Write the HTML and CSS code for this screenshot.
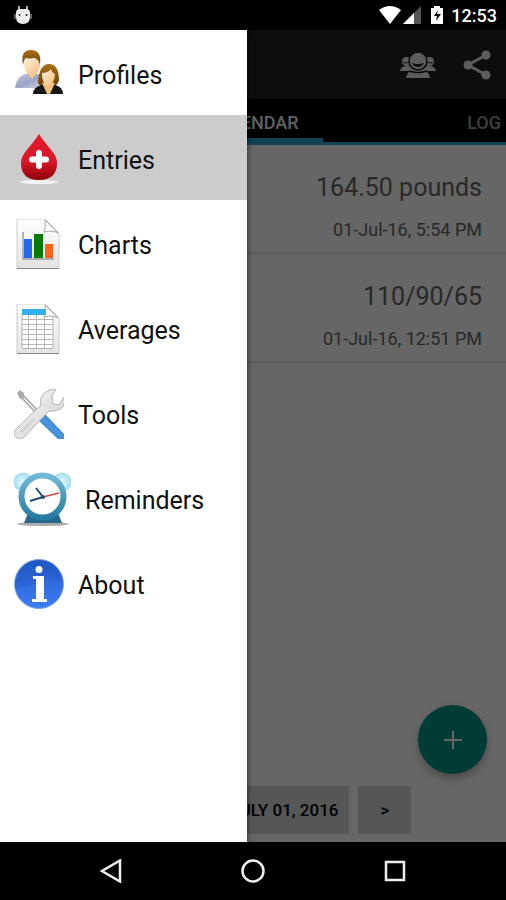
FILE: index.html
```
<!DOCTYPE html>
<html lang="en">
<head>
  <meta charset="UTF-8">
  <meta name="viewport" content="width=device-width, initial-scale=1">
  <title>Health Entries</title>
  <link rel="stylesheet" href="styles.css">
</head>
<body>
  <header class="status-bar">
    <svg class="bot" width="18" height="20" viewBox="0 0 18 20">
      <path d="M5 1v4M13 1v4" stroke="#eee" stroke-width="1.5"/>
      <path d="M2 8Q2 4 6 4h6q4 0 4 4v4q0 7-7 7t-7-7z" fill="#eee"/>
      <path d="M1 9v5M17 9v5" stroke="#bbb"/>
      <circle cx="5.500" cy="10" r="1" fill="#222"/><circle cx="12.500" cy="10" r="1" fill="#222"/>
    </svg>
    <svg width="22" height="18" viewBox="0 0 22 18"><path d="M0 4Q11-4 22 4L11 18z" fill="#fff"/></svg>
    <svg class="signal" width="18" height="18" viewBox="0 0 18 18"><path d="M0 18L18 0v18z" fill="#555"/><path d="M0 18L11 7v11z" fill="#fff"/></svg>
    <svg class="battery" width="12" height="18" viewBox="0 0 12 18"><path d="M0 2h3V0h6v2h3v16H0z" fill="#fff"/><path d="M7 4l-4 6h3l-1 5 5-7H6z" fill="#000"/></svg>
    <span>12:53</span>
  </header>

  <div class="app">
    <div class="toolbar">
      <button aria-label="Profiles">
        <svg width="36" height="28" viewBox="0 0 36 28" fill="#e6e6e6">
          <circle cx="6.500" cy="10.500" r="4.500"/><circle cx="29.500" cy="10.500" r="4.500"/>
          <path d="M0 20q1-5 7-5h22q6 0 7 5z"/>
          <path d="M6 27q1-7 8-8h8q7 1 8 8z"/>
          <circle cx="18" cy="10" r="9" stroke="#222" stroke-width="1.500"/>
          <path d="M12 12q6 2 12 0-2 4-6 4t-6-4z" fill="#222"/>
          <path d="M9 20q9 3 18 0" fill="none" stroke="#222" stroke-width="1.500"/>
          <path d="M3 11q4 2 6 0M27 11q3 2 6 0" fill="none" stroke="#222"/>
        </svg>
      </button>
      <button aria-label="Share">
        <svg width="28" height="30" viewBox="0 0 28 30" fill="#e6e6e6">
          <path d="M23 5L5 15l18 10" fill="none" stroke="#e6e6e6" stroke-width="3"/>
          <circle cx="23" cy="5" r="4.500"/><circle cx="5" cy="15" r="4.500"/><circle cx="23" cy="25" r="4.500"/>
        </svg>
      </button>
    </div>

    <nav class="tabs">
      <a class="tab active" href="#calendar">CALENDAR</a>
      <a class="tab last" href="#log">LOG</a>
    </nav>

    <ul class="entries">
      <li><div class="value">164.50 pounds</div><div class="date">01-Jul-16, 5:54 PM</div></li>
      <li><div class="value">110/90/65</div><div class="date">01-Jul-16, 12:51 PM</div></li>
    </ul>

    <div class="day-picker">
      <button class="step">&lt;</button>
      <button class="day">FRIDAY, JULY 01, 2016</button>
      <button class="step">&gt;</button>
    </div>

    <button class="fab" aria-label="Add entry">
      <svg width="18" height="18" viewBox="0 0 18 18"><path d="M9 0v18M0 9h18" stroke="#fff" stroke-width="2"/></svg>
    </button>

    <div class="scrim"></div>

    <nav class="drawer">
      <a href="#profiles">
        <svg width="50" height="50" viewBox="0 0 50 50">
          <defs>
            <linearGradient id="shirt" x1="0" y1="0" x2="1" y2="1"><stop offset="0" stop-color="#c9cde2"/><stop offset=".5" stop-color="#9ca3c4"/><stop offset="1" stop-color="#d5d9ea"/></linearGradient>
            <linearGradient id="hair" x1="0" y1="0" x2="0" y2="1"><stop offset="0" stop-color="#a97119"/><stop offset="1" stop-color="#6d3d08"/></linearGradient>
            <linearGradient id="skin" x1="0" y1="0" x2="1" y2="1"><stop offset="0" stop-color="#fff0da"/><stop offset="1" stop-color="#efbc7c"/></linearGradient>
          </defs>
          <path d="M1 39q1-11 10-14h13q7 3 8 14z" fill="url(#shirt)"/>
          <path d="M12 23l6 7 6-7z" fill="#f3c68d"/>
          <path d="M10 10h16v7q-2 9-8 9t-8-9z" fill="url(#skin)"/>
          <path d="M9 16Q6 1 17 1q11 0 9 15-1-6-6-7-6 1-8 0-2 1-3 7z" fill="url(#hair)"/>
          <path d="M24 34q1-19 11-19 10 0 10 17l-4 6H27z" fill="url(#hair)"/>
          <path d="M19 45q0-7 9-9h13q8 2 8 9z" fill="#161616"/>
          <path d="M28 34l5 11h3l5-11z" fill="#f2bd7c"/>
          <path d="M28 24q6 0 9-4 1 4 4 5-1 12-7 12-6-1-6-13z" fill="url(#skin)"/>
        </svg>
        <span>Profiles</span>
      </a>
      <a class="selected" href="#entries">
        <svg width="50" height="50" viewBox="0 0 50 50">
          <defs><linearGradient id="blood" x1="0" y1="0" x2="0" y2="1"><stop offset="0" stop-color="#e5182c"/><stop offset=".6" stop-color="#d8182c"/><stop offset="1" stop-color="#8d0008"/></linearGradient></defs>
          <ellipse cx="25" cy="48" rx="19" ry="2" fill="#f4f4f4"/>
          <path d="M25 0q3 5 13 17 5 6 5 12 0 17-18 17T7 29q0-6 5-12Q22 5 25 0z" fill="url(#blood)"/>
          <path d="M25 19v13M18 25.500h14" stroke="#fff" stroke-width="6" stroke-linecap="round"/>
        </svg>
        <span>Entries</span>
      </a>
      <a href="#charts">
        <svg width="50" height="50" viewBox="0 0 50 50">
          <defs><linearGradient id="page" x1="0" y1="0" x2="0" y2="1"><stop offset="0" stop-color="#fff"/><stop offset="1" stop-color="#e2e2e2"/></linearGradient></defs>
          <path d="M3 0h28l14 14v36H3z" fill="url(#page)" stroke="#ccc"/>
          <path d="M3 49.500h42" stroke="#888"/>
          <path d="M31 1q1 7-1 12 9-2 14 1z" fill="#fafafa" stroke="#aaa"/>
          <path d="M9 13v27h31" fill="none" stroke="#777"/>
          <path d="M10 20h8v19h-8z" fill="#2468e8"/><path d="M20 15h9v24h-9z" fill="#087808"/><path d="M31 25h8v14h-8z" fill="#fa6418"/>
        </svg>
        <span>Charts</span>
      </a>
      <a href="#averages">
        <svg width="50" height="50" viewBox="0 0 50 50">
          <path d="M3 0h28l14 14v36H3z" fill="url(#page)" stroke="#ccc"/>
          <path d="M3 49.500h42" stroke="#888"/>
          <path d="M8 11h31v33H8z" fill="#fff"/>
          <path d="M8 15.500h31M8 20.500h31M8 25.500h31M8 30.500h31M8 35.500h31M8 40.500h31M8 44.500h31M8 11v33M14.500 11v33M22.500 11v33M30.500 11v33M39 11v33" stroke="#b5b5b5"/>
          <path d="M31 1q1 7-1 12 9-2 14 1z" fill="#fafafa" stroke="#aaa"/>
          <path d="M8 5h24v6H8z" fill="#32b1ed"/>
        </svg>
        <span>Averages</span>
      </a>
      <a href="#tools">
        <svg width="50" height="50" viewBox="0 0 50 50">
          <defs>
            <linearGradient id="handle" x1="0" y1="1" x2="1" y2="0"><stop offset="0" stop-color="#1e5fae"/><stop offset=".5" stop-color="#4a96de"/><stop offset="1" stop-color="#1c62b4"/></linearGradient>
            <linearGradient id="steel" x1="0" y1="0" x2="1" y2="1"><stop offset="0" stop-color="#fafafa"/><stop offset="1" stop-color="#cdcdcd"/></linearGradient>
          </defs>
          <path d="M6 5l21 22" stroke="#959595" stroke-width="4"/>
          <path d="M6 5l21 22" stroke="#e2e2e2" stroke-width="2"/>
          <path d="M3 4l3-3 4 3v5l-4 1z" fill="#aaa"/>
          <path d="M31 25l19 20v5h-6L24 31z" fill="url(#handle)"/>
          <path d="M27 16q-2-9 5-13 5-4 10-3l-4 7 1 8 6 1 5-8q2 9-4 12-5 3-11 2L10 48q-4 4-8 0-4-4 0-8z" fill="url(#steel)" stroke="#b4b4b4"/>
          <path d="M7 43l13-13" stroke="#d2d2d2" stroke-width="3" stroke-dasharray="3 1"/>
        </svg>
        <span>Tools</span>
      </a>
      <a href="#reminders">
        <svg width="57" height="54" viewBox="0 0 57 54">
          <defs>
            <linearGradient id="rim" x1="0" y1="0" x2="0" y2="1"><stop offset="0" stop-color="#72b9d5"/><stop offset="1" stop-color="#287ba2"/></linearGradient>
            <radialGradient id="bell"><stop offset="0" stop-color="#e3fbff"/><stop offset="1" stop-color="#a4dceb"/></radialGradient>
          </defs>
          <ellipse cx="29" cy="52" rx="26" ry="2" fill="#aaa"/>
          <path d="M14 41h30l4 10H10z" fill="#24698c"/>
          <circle cx="9" cy="10" r="9.500" fill="url(#bell)"/><circle cx="48" cy="10" r="9.500" fill="url(#bell)"/>
          <circle cx="28.500" cy="24.500" r="21" fill="#fff" stroke="url(#rim)" stroke-width="6"/>
          <path d="M29 25l16-4" stroke="#d84444" stroke-width="1.500"/>
          <path d="M29 25l-13 4M29 25l-7-9" stroke="#214d71" stroke-width="2"/>
          <circle cx="29" cy="25" r="2" fill="#214d71"/>
        </svg>
        <span>Reminders</span>
      </a>
      <a href="#about">
        <svg width="50" height="50" viewBox="0 0 50 50">
          <defs><linearGradient id="info" x1="0" y1="0" x2="0" y2="1"><stop offset="0" stop-color="#245bc9"/><stop offset="1" stop-color="#3c7ef2"/></linearGradient></defs>
          <circle cx="25" cy="25" r="24.500" fill="url(#info)" stroke="#7ea3e4"/>
          <path d="M1 29q18-1 25-7t22-1Q44 1 25 1T1 29z" fill="#1746b0" opacity=".2"/>
          <circle cx="25" cy="10.500" r="3.500" fill="#fff"/>
          <path d="M19 17h11v23h3v3H18v-3h4V20h-3z" fill="#fff"/>
        </svg>
        <span>About</span>
      </a>
    </nav>
  </div>

  <footer class="nav-bar">
    <button aria-label="Back"><svg width="24" height="24" viewBox="0 0 24 24"><path d="M21 1.500v21L3 12z"/></svg></button>
    <button aria-label="Home"><svg width="24" height="24" viewBox="0 0 24 24"><circle cx="12" cy="12" r="10.500"/></svg></button>
    <button aria-label="Recents"><svg width="24" height="24" viewBox="0 0 24 24"><path d="M3 3h18v18H3z"/></svg></button>
  </footer>
</body>
</html>
```
FILE: styles.css
```
* { box-sizing: border-box; }
body { margin: 0; min-height: 100vh; display: flex; flex-direction: column; font-family: Roboto, sans-serif; background: #000; }
button { border: 0; padding: 0; background: none; font-family: inherit; cursor: pointer; }
a { color: inherit; text-decoration: none; }
svg { display: block; flex: none; }

.status-bar { height: 30px; padding: 0 9px 0 14px; display: flex; align-items: center; color: #fff; font-size: 18px; font-weight: 500; }
.status-bar .bot { margin-right: auto; }
.signal { margin: 0 10px 0 2px; }
.battery { margin-right: 8px; }

.app { flex: 1; position: relative; display: flex; flex-direction: column; overflow: hidden; background: #fff; }
.toolbar { height: 69px; padding: 0 15px; display: flex; justify-content: flex-end; align-items: center; gap: 27px; background: #222; }

.tabs { height: 46px; display: grid; grid-template-columns: 1fr auto 1fr; background: #000; border-bottom: 3px solid #33a5d5; font-size: 18px; font-weight: 500; line-height: 20px; }
.tab { padding-top: 14px; color: #999; }
.tab.active { grid-column: 2; padding: 14px 24px 0; color: #f0f0f0; border-bottom: 4px solid #33a5d5; }
.tab.last { padding-right: 5px; text-align: right; }

.entries { flex: 1; margin: 0; padding: 0; list-style: none; text-align: right; color: #666; }
.entries li { padding: 27px 24px 10px; border-bottom: 2px solid #e6e6e6; }
.value { font-size: 25px; line-height: 32px; }
.date { margin-top: 14px; font-size: 18px; line-height: 24px; }

.day-picker { padding: 8px; display: flex; justify-content: center; gap: 9px; }
.day-picker button { height: 48px; background: #d7d7d7; border-radius: 2px; color: #000; font-size: 17px; font-weight: 500; }
.day-picker .step { width: 53px; }
.day-picker .day { padding: 0 11px; white-space: nowrap; }

.fab { position: absolute; right: 19px; bottom: 68px; width: 69px; height: 69px; display: flex; align-items: center; justify-content: center; border-radius: 50%; background: #009688; box-shadow: 0 4px 8px rgba(0, 0, 0, 0.3); }
.scrim { position: absolute; inset: 0; background: rgba(0, 0, 0, 0.6); }

.drawer { position: absolute; top: 0; bottom: 0; left: 0; width: 247px; background: #fff; box-shadow: 0 0 6px rgba(0, 0, 0, 0.6); color: #111; font-size: 25px; }
.drawer a { height: 85px; padding: 2px 14px 0; display: flex; align-items: center; gap: 14px; }
.drawer span { padding-top: 3px; }
.drawer .selected { background: #ccc; }

.nav-bar { height: 58px; display: flex; justify-content: center; align-items: center; }
.nav-bar button { width: 142px; display: flex; justify-content: center; }
.nav-bar svg { fill: none; stroke: #eee; stroke-width: 2.5; }
```
